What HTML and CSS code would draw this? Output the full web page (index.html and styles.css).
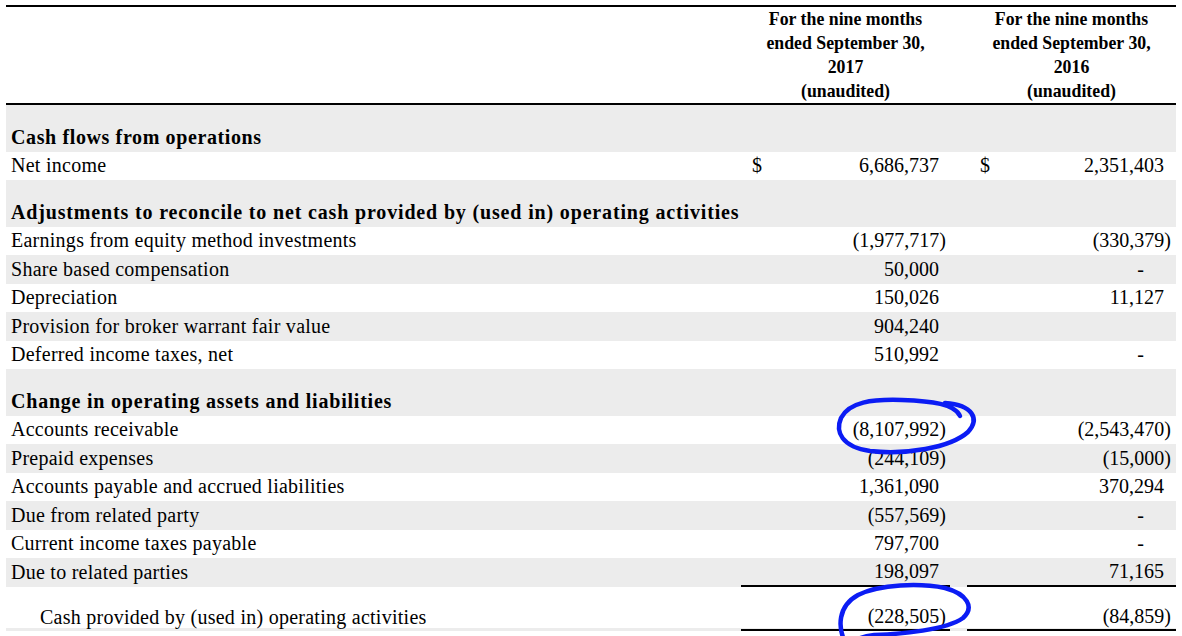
FILE: index.html
```html
<!DOCTYPE html>
<html lang="en">
<head>
<meta charset="utf-8">
<title>Cash flows</title>
<link rel="stylesheet" href="styles.css">
</head>
<body>
<div class="sheet">
  <div class="head">
    <div></div>
    <div class="hcol">For the nine months<br>ended September 30,<br>2017<br>(unaudited)</div>
    <div></div>
    <div class="hcol">For the nine months<br>ended September 30,<br>2016<br>(unaudited)</div>
  </div>

  <div class="row shade group">
    <div class="label sec sec1">Cash flows from operations</div>
    <div class="amt a1"></div><div></div><div class="amt a2"></div>
  </div>
  <div class="row">
    <div class="label">Net income</div>
    <div class="amt a1"><span>$</span><span>6,686,737</span></div><div></div>
    <div class="amt a2"><span>$</span><span>2,351,403</span></div>
  </div>

  <div class="row shade group">
    <div class="label sec sec2">Adjustments to reconcile to net cash provided by (used in) operating activities</div>
    <div class="amt a1"></div><div></div><div class="amt a2"></div>
  </div>
  <div class="row">
    <div class="label">Earnings from equity method investments</div>
    <div class="amt a1"><span></span><span class="neg">(1,977,717)</span></div><div></div>
    <div class="amt a2"><span></span><span class="neg">(330,379)</span></div>
  </div>
  <div class="row shade">
    <div class="label">Share based compensation</div>
    <div class="amt a1"><span></span><span>50,000</span></div><div></div>
    <div class="amt a2"><span></span><span class="dash">-</span></div>
  </div>
  <div class="row">
    <div class="label">Depreciation</div>
    <div class="amt a1"><span></span><span>150,026</span></div><div></div>
    <div class="amt a2"><span></span><span>11,127</span></div>
  </div>
  <div class="row shade">
    <div class="label">Provision for broker warrant fair value</div>
    <div class="amt a1"><span></span><span>904,240</span></div><div></div>
    <div class="amt a2"></div>
  </div>
  <div class="row">
    <div class="label">Deferred income taxes, net</div>
    <div class="amt a1"><span></span><span>510,992</span></div><div></div>
    <div class="amt a2"><span></span><span class="dash">-</span></div>
  </div>

  <div class="row shade group">
    <div class="label sec sec3">Change in operating assets and liabilities</div>
    <div class="amt a1"></div><div></div><div class="amt a2"></div>
  </div>
  <div class="row">
    <div class="label">Accounts receivable</div>
    <div class="amt a1"><span></span><span class="neg">(8,107,992)</span></div><div></div>
    <div class="amt a2"><span></span><span class="neg">(2,543,470)</span></div>
  </div>
  <div class="row shade">
    <div class="label">Prepaid expenses</div>
    <div class="amt a1"><span></span><span class="neg">(244,109)</span></div><div></div>
    <div class="amt a2"><span></span><span class="neg">(15,000)</span></div>
  </div>
  <div class="row">
    <div class="label">Accounts payable and accrued liabilities</div>
    <div class="amt a1"><span></span><span>1,361,090</span></div><div></div>
    <div class="amt a2"><span></span><span>370,294</span></div>
  </div>
  <div class="row shade">
    <div class="label">Due from related party</div>
    <div class="amt a1"><span></span><span class="neg">(557,569)</span></div><div></div>
    <div class="amt a2"><span></span><span class="dash">-</span></div>
  </div>
  <div class="row">
    <div class="label">Current income taxes payable</div>
    <div class="amt a1"><span></span><span>797,700</span></div><div></div>
    <div class="amt a2"><span></span><span class="dash">-</span></div>
  </div>
  <div class="row shade">
    <div class="label">Due to related parties</div>
    <div class="amt a1 rule"><span></span><span>198,097</span></div><div></div>
    <div class="amt a2 rule"><span></span><span>71,165</span></div>
  </div>
  <div class="row total">
    <div class="label indent">Cash provided by (used in) operating activities</div>
    <div class="amt a1 rule"><span></span><span class="neg">(228,505)</span></div><div></div>
    <div class="amt a2 rule"><span></span><span class="neg">(84,859)</span></div>
  </div>
</div>

<svg class="ink" width="1182" height="636" viewBox="0 0 1182 636" aria-hidden="true">
  <path d="M 960 416 C 955 404, 932 401, 902 400 C 872 399, 849 402, 841 418 C 835 432, 842 447, 870 451 C 905 455, 950 448, 968 432 C 980 419, 973 405, 945 403"/>
  <path d="M 846 644 C 837 627, 838 606, 858 595 C 880 584, 920 583, 945 588 C 967 594, 975 607, 963 618 C 946 630, 902 634, 874 635 C 862 636, 855 639, 850 646"/>
</svg>
</body>
</html>
```

FILE: styles.css
```css
html, body {
  margin: 0;
  padding: 0;
  background: #ffffff;
}

body {
  width: 1182px;
  height: 636px;
  overflow: hidden;
  position: relative;
  font-family: "Liberation Serif", "Times New Roman", serif;
  color: #000000;
}

.sheet {
  margin: 5px 0 0 6px;
  width: 1170px;
}

.head,
.row {
  display: grid;
  grid-template-columns: 735px 209px 17px 209px;
  box-sizing: border-box;
}

.head {
  border-top: 2px solid #000;
  border-bottom: 2px solid #000;
  height: 100px;
}

.hcol {
  font-weight: bold;
  font-size: 17.8px;
  line-height: 24px;
  text-align: center;
  white-space: nowrap;
}

.row {
  height: 28.5px;
  font-size: 20px;
  align-items: stretch;
}

.row > div {
  display: flex;
  align-items: center;
  box-sizing: border-box;
}

.shade {
  background: #ececec;
}

.group {
  height: 46.5px;
  padding-top: 18px;
}

.label {
  padding-left: 5px;
  white-space: nowrap;
  letter-spacing: 0.26px;
}

.sec {
  font-weight: bold;
}

.sec1 {
  letter-spacing: 0.62px;
}

.sec2 {
  letter-spacing: 0.84px;
}

.sec3 {
  letter-spacing: 0.78px;
}

.indent {
  padding-left: 34px;
}

.amt {
  justify-content: space-between;
}

.a1 {
  padding: 0 11px 0 11px;
}

.a2 {
  padding: 0 12px 0 13px;
}

.neg {
  margin-right: -7px;
}

.dash {
  padding-right: 20px;
}

.rule {
  border-bottom: 2px solid #000;
}

.total {
  height: 44.5px;
  padding-top: 17px;
  background: linear-gradient(#ffffff 0 41.5px, #ececec 41.5px);
}

.ink {
  position: absolute;
  left: 0;
  top: 0;
  pointer-events: none;
  fill: none;
  stroke: #0b1cf4;
  stroke-width: 4.5;
  stroke-linecap: round;
  stroke-linejoin: round;
}
```
